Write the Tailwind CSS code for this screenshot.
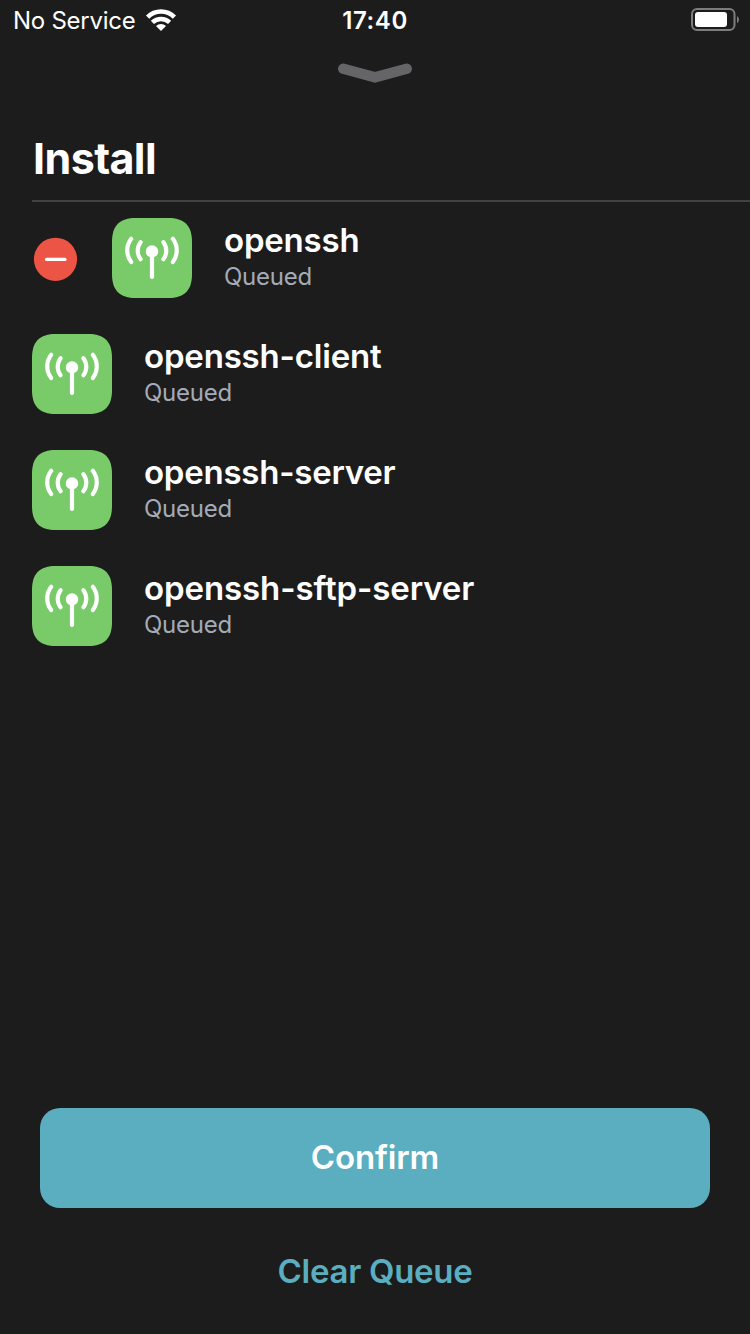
<!DOCTYPE html>
<html lang="en">
<head>
<meta charset="utf-8">
<title>Install Queue</title>
<script src="https://cdn.jsdelivr.net/npm/@tailwindcss/browser@4"></script>
</head>
<body class="bg-[#1c1c1c]">
<svg class="hidden">
  <symbol id="antenna" viewBox="0 0 80 80">
    <path d="M0 24C0 7.5 7.5 0 24 0H56C72.5 0 80 7.5 80 24V56C80 72.5 72.5 80 56 80H24C7.5 80 0 72.5 0 56Z" fill="#79cb69"/>
    <circle cx="40" cy="33.4" r="6.2" fill="#fff"/>
    <path d="M40 34V59M19.2 20.8A19 19 0 0 0 19.2 44M60.8 20.8A19 19 0 0 1 60.8 44M28.6 24.2A14 14 0 0 0 28.6 41.2M51.4 24.2A14 14 0 0 1 51.4 41.2" fill="none" stroke="#fff" stroke-width="4.2" stroke-linecap="round"/>
  </symbol>
</svg>
<main class="w-[750px] h-[1334px] overflow-hidden flex flex-col bg-[#1c1c1c] text-white font-['Inter','Liberation_Sans',sans-serif]">
  <header class="h-10 shrink-0 grid grid-cols-3 items-center pl-[13px] pr-[11px] text-[24px] leading-[40px]">
    <div class="flex items-center gap-[9px]">
      <span class="tracking-[-0.25px] whitespace-nowrap pt-[2px] leading-[38px]">No Service</span>
      <svg class="w-[32px] h-[24px]" viewBox="0 0 32 24" fill="none" stroke="#fff">
        <path d="M2.6 9.1C10 1.7 22 1.7 29.4 9.1" stroke-width="4.6"/>
        <path d="M7.4 14.4C12.3 9.7 19.7 9.7 24.6 14.4" stroke-width="4.5"/>
        <path d="M11 18.1C13.9 15.4 18.1 15.4 21 18.1L16 23Z" fill="#fff" stroke="none"/>
      </svg>
    </div>
    <div class="text-center font-semibold tracking-[0.6px] pt-[2px] pr-[2px] leading-[38px]">17:40</div>
    <div class="flex justify-end">
      <svg class="w-[48px] h-[24px]" viewBox="0 0 48 24">
        <rect x="1" y="1" width="42.5" height="21" rx="5" fill="none" stroke="#7d7d7d" stroke-width="2"/>
        <rect x="4" y="4" width="32" height="15" rx="3" fill="#fff"/>
        <path d="M46 8Q48 9 48 11.5T46 15Z" fill="#7d7d7d"/>
      </svg>
    </div>
  </header>
  <div class="flex justify-center pt-[22px] h-[84px] shrink-0">
    <svg class="w-[76px] h-[24px]" viewBox="0 0 76 24" fill="none" stroke="#656567" stroke-width="10.5" stroke-linecap="round"><path d="M6.3 6.8L38 15.2L69.7 6.8" stroke-linejoin="miter"/></svg>
  </div>
  <section class="pl-8">
    <h1 class="h-[76px] pl-px text-[43px] leading-[68px] font-bold tracking-[-0.6px]">Install</h1>
    <div class="h-[2px] bg-[#414143]"></div>
    <ul>
      <li class="h-[116px] pt-4 flex">
        <svg class="w-[46px] h-[46px] mt-[18px] mr-[34px]" viewBox="0 0 46 46"><circle cx="23.5" cy="23.3" r="21.6" fill="#ec5545"/><path d="M14.5 23.4H33" stroke="#fff" stroke-width="3.2" stroke-linecap="round"/></svg>
        <svg class="w-20 h-20 mr-8"><use href="#antenna"/></svg>
        <div><h2 class="text-[33px] leading-[44px] font-semibold tracking-[-0.2px]">openssh</h2><p class="text-[24px] leading-[30px] tracking-[-0.25px] text-[#a4abb6]">Queued</p></div>
      </li>
      <li class="h-[116px] pt-4 flex">
        <svg class="w-20 h-20 mr-8"><use href="#antenna"/></svg>
        <div><h2 class="text-[33px] leading-[44px] font-semibold tracking-[-0.18px]">openssh-client</h2><p class="text-[24px] leading-[30px] tracking-[-0.25px] text-[#a4abb6]">Queued</p></div>
      </li>
      <li class="h-[116px] pt-4 flex">
        <svg class="w-20 h-20 mr-8"><use href="#antenna"/></svg>
        <div><h2 class="text-[33px] leading-[44px] font-semibold tracking-[-0.24px]">openssh-server</h2><p class="text-[24px] leading-[30px] tracking-[-0.25px] text-[#a4abb6]">Queued</p></div>
      </li>
      <li class="h-[116px] pt-4 flex">
        <svg class="w-20 h-20 mr-8"><use href="#antenna"/></svg>
        <div><h2 class="text-[33px] leading-[44px] font-semibold tracking-[-0.1px]">openssh-sftp-server</h2><p class="text-[24px] leading-[30px] tracking-[-0.25px] text-[#a4abb6]">Queued</p></div>
      </li>
    </ul>
  </section>
  <footer class="mt-auto h-[226px] px-10 flex flex-col shrink-0 text-[33px] font-semibold">
    <button class="h-[100px] rounded-[20px] bg-[#5aaebf] tracking-[-0.15px]">Confirm</button>
    <button class="h-[100px] mt-[14px] text-[#5aaebf] tracking-[-0.3px] pb-px">Clear Queue</button>
  </footer>
</main>
</body>
</html>
